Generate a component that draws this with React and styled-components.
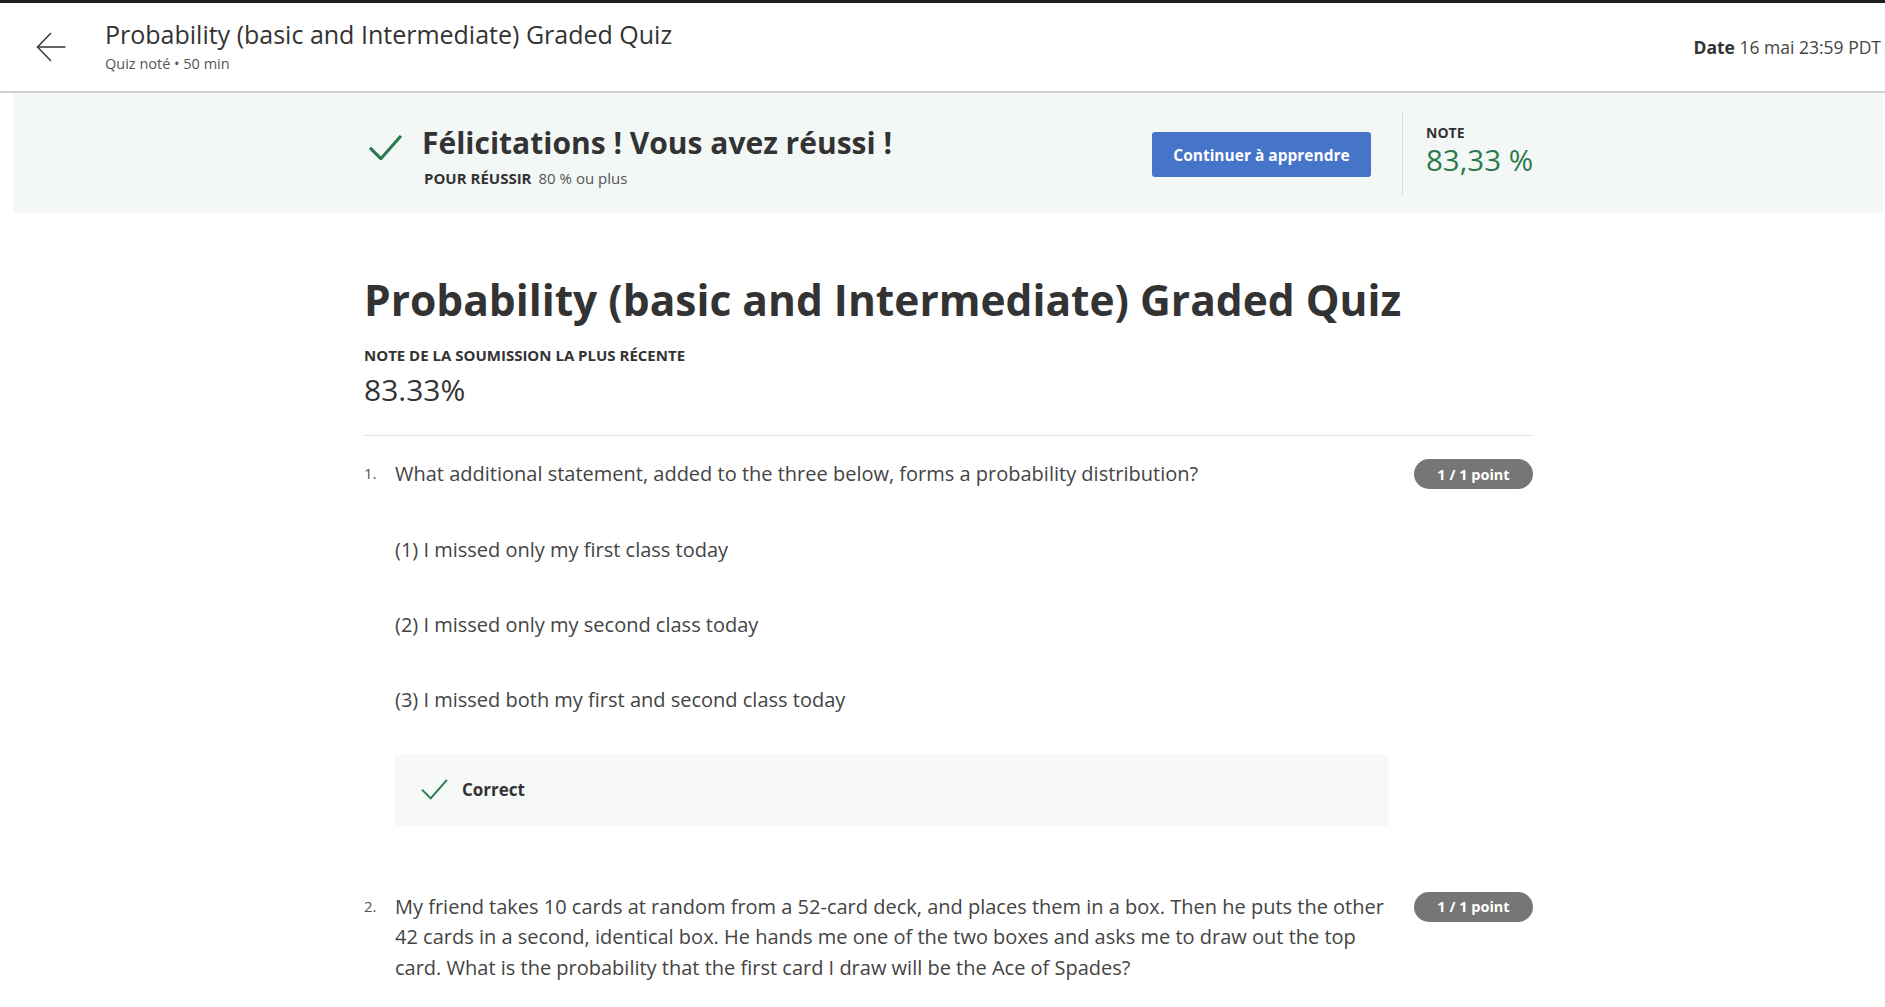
import styled, { createGlobalStyle } from "styled-components";

const GlobalStyle = createGlobalStyle`
  body {
    margin: 0;
    background: #fff;
    font-family: "Open Sans", "Liberation Sans", sans-serif;
    color: #333;
  }
  * { box-sizing: border-box; }
`;

const questions = [
  {
    num: "1.",
    text: "What additional statement, added to the three below, forms a probability distribution?",
    options: [
      "(1) I missed only my first class today",
      "(2) I missed only my second class today",
      "(3) I missed both my first and second class today",
    ],
    correct: true,
  },
  {
    num: "2.",
    text: "My friend takes 10 cards at random from a 52-card deck, and places them in a box. Then he puts the other 42 cards in a second, identical box. He hands me one of the two boxes and asks me to draw out the top card. What is the probability that the first card I draw will be the Ace of Spades?",
    options: [],
  },
];

export default function App() {
  return (
    <>
      <GlobalStyle />
      <Header>
        <BackButton aria-label="Retour">
          <svg width="30" height="30" viewBox="0 0 30 30" fill="none" stroke="#333" strokeWidth="1.4" strokeLinecap="round" strokeLinejoin="round">
            <path d="M29 15H1.5" />
            <path d="M14.5 1.5L1.5 15l13 13.5" />
          </svg>
        </BackButton>
        <HeaderText>
          <HeaderTitle>Probability (basic and Intermediate) Graded Quiz</HeaderTitle>
          <HeaderSub>Quiz noté • 50 min</HeaderSub>
        </HeaderText>
        <DueDate><b>Date</b> 16 mai 23:59 PDT</DueDate>
      </Header>

      <Main>
        <Banner>
          <Container className="bannerInner">
            <PassBlock>
              <CheckIcon size={33} stroke={3} />
              <div>
                <PassTitle>Félicitations ! Vous avez réussi !</PassTitle>
                <PassSub><b>POUR RÉUSSIR</b>80 % ou plus</PassSub>
              </div>
            </PassBlock>
            <PrimaryButton>Continuer à apprendre</PrimaryButton>
            <Divider />
            <GradeBlock>
              <GradeLabel>NOTE</GradeLabel>
              <GradeValue>83,33 %</GradeValue>
            </GradeBlock>
          </Container>
        </Banner>

        <Container>
          <QuizTitle>Probability (basic and Intermediate) Graded Quiz</QuizTitle>
          <SmallCaps>NOTE DE LA SOUMISSION LA PLUS RÉCENTE</SmallCaps>
          <Score>83.33%</Score>
          <Rule />

          {questions.map((q) => (
            <Question key={q.num}>
              <QNum>{q.num}</QNum>
              <QBody>
                <QText>{q.text}</QText>
                {q.options.map((opt) => (
                  <Option key={opt}>{opt}</Option>
                ))}
                {q.correct && (
                  <Feedback>
                    <CheckIcon size={27} stroke={2.4} />
                    <span>Correct</span>
                  </Feedback>
                )}
              </QBody>
              <Pill>1 / 1 point</Pill>
            </Question>
          ))}
        </Container>
      </Main>
    </>
  );
}

function CheckIcon({ size, stroke }) {
  return (
    <svg width={size} height={size * 0.78} viewBox="0 0 32 25" fill="none" stroke="#2b7a4e" strokeWidth={stroke} strokeLinecap="square">
      <path d="M2 13.5l9.5 9.5L30 2" />
    </svg>
  );
}

const Header = styled.header`
  display: flex;
  align-items: center;
  height: 93px;
  border-top: 3px solid #1f1f1f;
  border-bottom: 2px solid #cfcfcf;
  padding: 0 4px 0 36px;
`;

const BackButton = styled.button`
  display: flex;
  align-items: center;
  justify-content: center;
  background: none;
  border: 0;
  padding: 0;
  width: 30px;
  height: 30px;
  margin-right: 39px;
  cursor: pointer;
`;

const HeaderText = styled.div`
  display: flex;
  flex-direction: column;
  flex: 1;
  margin-top: -2px;
`;

const HeaderTitle = styled.h1`
  margin: 0;
  font-size: 25px;
  line-height: 31px;
  font-weight: 400;
  color: #333;
`;

const HeaderSub = styled.span`
  margin-top: 4px;
  font-size: 14.5px;
  line-height: 20px;
  color: #555;
`;

const DueDate = styled.div`
  font-size: 17.5px;
  color: #444;
  b { color: #333; font-weight: 700; }
`;

const Main = styled.main`
  margin-left: 14px;
  padding-right: 2px;
  padding-bottom: 40px;
`;

const Container = styled.div`
  width: 1169px;
  margin: 0 auto;

  &.bannerInner {
    display: flex;
    align-items: center;
    height: 100%;
  }
`;

const Banner = styled.section`
  height: 120px;
  background: #f3f8f7;
  margin-bottom: 61px;
`;

const PassBlock = styled.div`
  display: flex;
  align-items: flex-start;
  gap: 20px;
  flex: 1;
  padding-left: 5px;
  padding-top: 5px;

  svg { margin-top: 11px; }
`;

const PassTitle = styled.h2`
  margin: 0;
  font-size: 30px;
  line-height: 38px;
  font-weight: 700;
  color: #333;
`;

const PassSub = styled.p`
  margin: 6px 0 0 2px;
  font-size: 15px;
  line-height: 20px;
  color: #555;

  b {
    color: #333;
    margin-right: 7px;
  }
`;

const PrimaryButton = styled.button`
  width: 219px;
  height: 45px;
  border: 0;
  border-radius: 3px;
  background: #4574c9;
  color: #fff;
  font-family: inherit;
  font-size: 15.5px;
  font-weight: 700;
  cursor: pointer;
  margin-top: 3px;
`;

const Divider = styled.div`
  width: 1px;
  height: 83px;
  background: #dadede;
  margin: 0 23px 0 31px;
`;

const GradeBlock = styled.div`
  display: flex;
  flex-direction: column;
  width: 107px;
  margin-top: -4px;
`;

const GradeLabel = styled.span`
  font-size: 14px;
  line-height: 18px;
  font-weight: 700;
  color: #333;
`;

const GradeValue = styled.span`
  font-size: 29.5px;
  line-height: 36px;
  color: #2b7a4e;
  white-space: nowrap;
`;

const QuizTitle = styled.h1`
  margin: 0;
  font-size: 42.5px;
  line-height: 52px;
  font-weight: 700;
  color: #333;
`;

const SmallCaps = styled.div`
  margin-top: 19px;
  font-size: 15px;
  line-height: 20px;
  font-weight: 700;
  color: #333;
`;

const Score = styled.div`
  margin-top: 6px;
  font-size: 30px;
  line-height: 38px;
  color: #333;
`;

const Rule = styled.hr`
  margin: 26px 0 0;
  border: 0;
  border-top: 1px solid #e1e1e1;
`;

const Question = styled.div`
  display: flex;
  align-items: flex-start;
  padding-top: 23px;
  margin-bottom: 43px;
`;

const QNum = styled.span`
  width: 31px;
  flex: none;
  font-size: 15px;
  line-height: 28px;
  color: #555;
`;

const QBody = styled.div`
  width: 993px;
  display: flex;
  flex-direction: column;
`;

const QText = styled.p`
  margin: 0;
  font-size: 20px;
  line-height: 30.5px;
  color: #444;
`;

const Option = styled.p`
  margin: 45px 0 0;
  font-size: 20px;
  line-height: 30px;
  color: #444;
`;

const Feedback = styled.div`
  display: flex;
  align-items: center;
  gap: 14px;
  height: 72px;
  margin-top: 39px;
  padding-left: 26px;
  background: #f7f8f8;
  font-size: 17px;
  font-weight: 700;
  color: #333;
`;

const Pill = styled.span`
  margin-left: auto;
  width: 119px;
  height: 30px;
  border-radius: 15px;
  background: #767676;
  color: #fff;
  font-size: 14.5px;
  font-weight: 700;
  display: flex;
  align-items: center;
  justify-content: center;
`;
